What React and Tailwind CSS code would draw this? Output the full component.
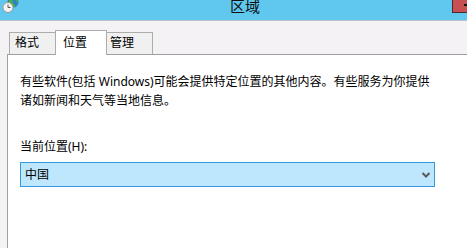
import React from "react";

const FONT = { fontFamily: '"Noto Sans", "Noto Sans CJK SC", sans-serif' };

function AppIcon() {
  return (
    <svg width="18" height="14" viewBox="0 0 18 14" className="block">
      <circle cx="12" cy="3" r="5.5" fill="#2f7fd0" />
      <path d="M8 1 Q10 -1 12 1 Q11 4 13 5 Q15 6 14 8 Q11 8 10 6 Q8 5 8 1Z" fill="#45b23a" />
      <path d="M14 -1 Q17 1 17 4 Q15 3 14 -1Z" fill="#45b23a" />
      <circle cx="7" cy="8.5" r="5" fill="#f4f4f4" stroke="#9a9a9a" strokeWidth="1" />
      <path d="M7 5.5 V8.5 H9.5" stroke="#555" strokeWidth="1" fill="none" />
    </svg>
  );
}

export default function App() {
  return (
    <div
      className="w-[467px] h-[248px] overflow-hidden bg-[#f5f2f5] text-black text-[12px] flex flex-col"
      style={FONT}
    >
      {/* title bar */}
      <div className="relative h-[21px] shrink-0 bg-[#60c8ee] border-b border-[#b8c4cc] flex items-start">
        <div className="pl-[1px] -mt-[1px]">
          <AppIcon />
        </div>
        <div
          className="absolute left-[230px] -top-[2px] text-[15px] leading-[15px] text-[#111]"
          style={{ fontFamily: '"Noto Sans CJK SC", sans-serif' }}
        >
          区域
        </div>
        <div className="absolute left-[452px] -top-[2px] w-[50px] h-[15px] bg-[#c75050] border border-[#4a2a2a]">
          <div className="absolute left-[11px] top-[5px] w-[4px] h-[2px] bg-[#111]" />
        </div>
      </div>

      {/* tabs */}
      <div className="h-[33px] shrink-0 flex items-end pl-[9px]">
        <div className="h-[22px] w-[46px] bg-[#f0f0f0] border-t border-l border-[#acacac] pl-[5px] leading-[20px]">
          格式
        </div>
        <div className="relative z-10 -mb-px h-[25px] w-[52px] bg-white border-t border-l border-r border-[#acacac] pl-[7px] leading-[23px]">
          位置
        </div>
        <div className="h-[22px] w-[46px] bg-[#f0f0f0] border-t border-r border-[#acacac] pl-[3px] leading-[20px]">
          管理
        </div>
      </div>

      {/* panel */}
      <div className="flex-1 ml-[7px] bg-white border-t border-l border-[#a0a0a0] pl-[12px] pt-[17px]">
        <p className="leading-[19px]">
          有些软件(包括 Windows)可能会提供特定位置的其他内容。有些服务为你提供
          <br />
          诸如新闻和天气等当地信息。
        </p>
        <p className="mt-[27px] leading-[19px]">当前位置(H):</p>
        <div className="mt-[6px] w-[415px] h-[25px] bg-[#bee6fd] border border-[#3399dd] flex items-center justify-between pl-[4px] pr-[3px]">
          <span className="leading-[18px]">中国</span>
          <svg width="10" height="8" viewBox="0 0 10 8">
            <polyline points="1.5,2 5,5.5 8.5,2" fill="none" stroke="#5a5a5a" strokeWidth="2" />
          </svg>
        </div>
      </div>
    </div>
  );
}
